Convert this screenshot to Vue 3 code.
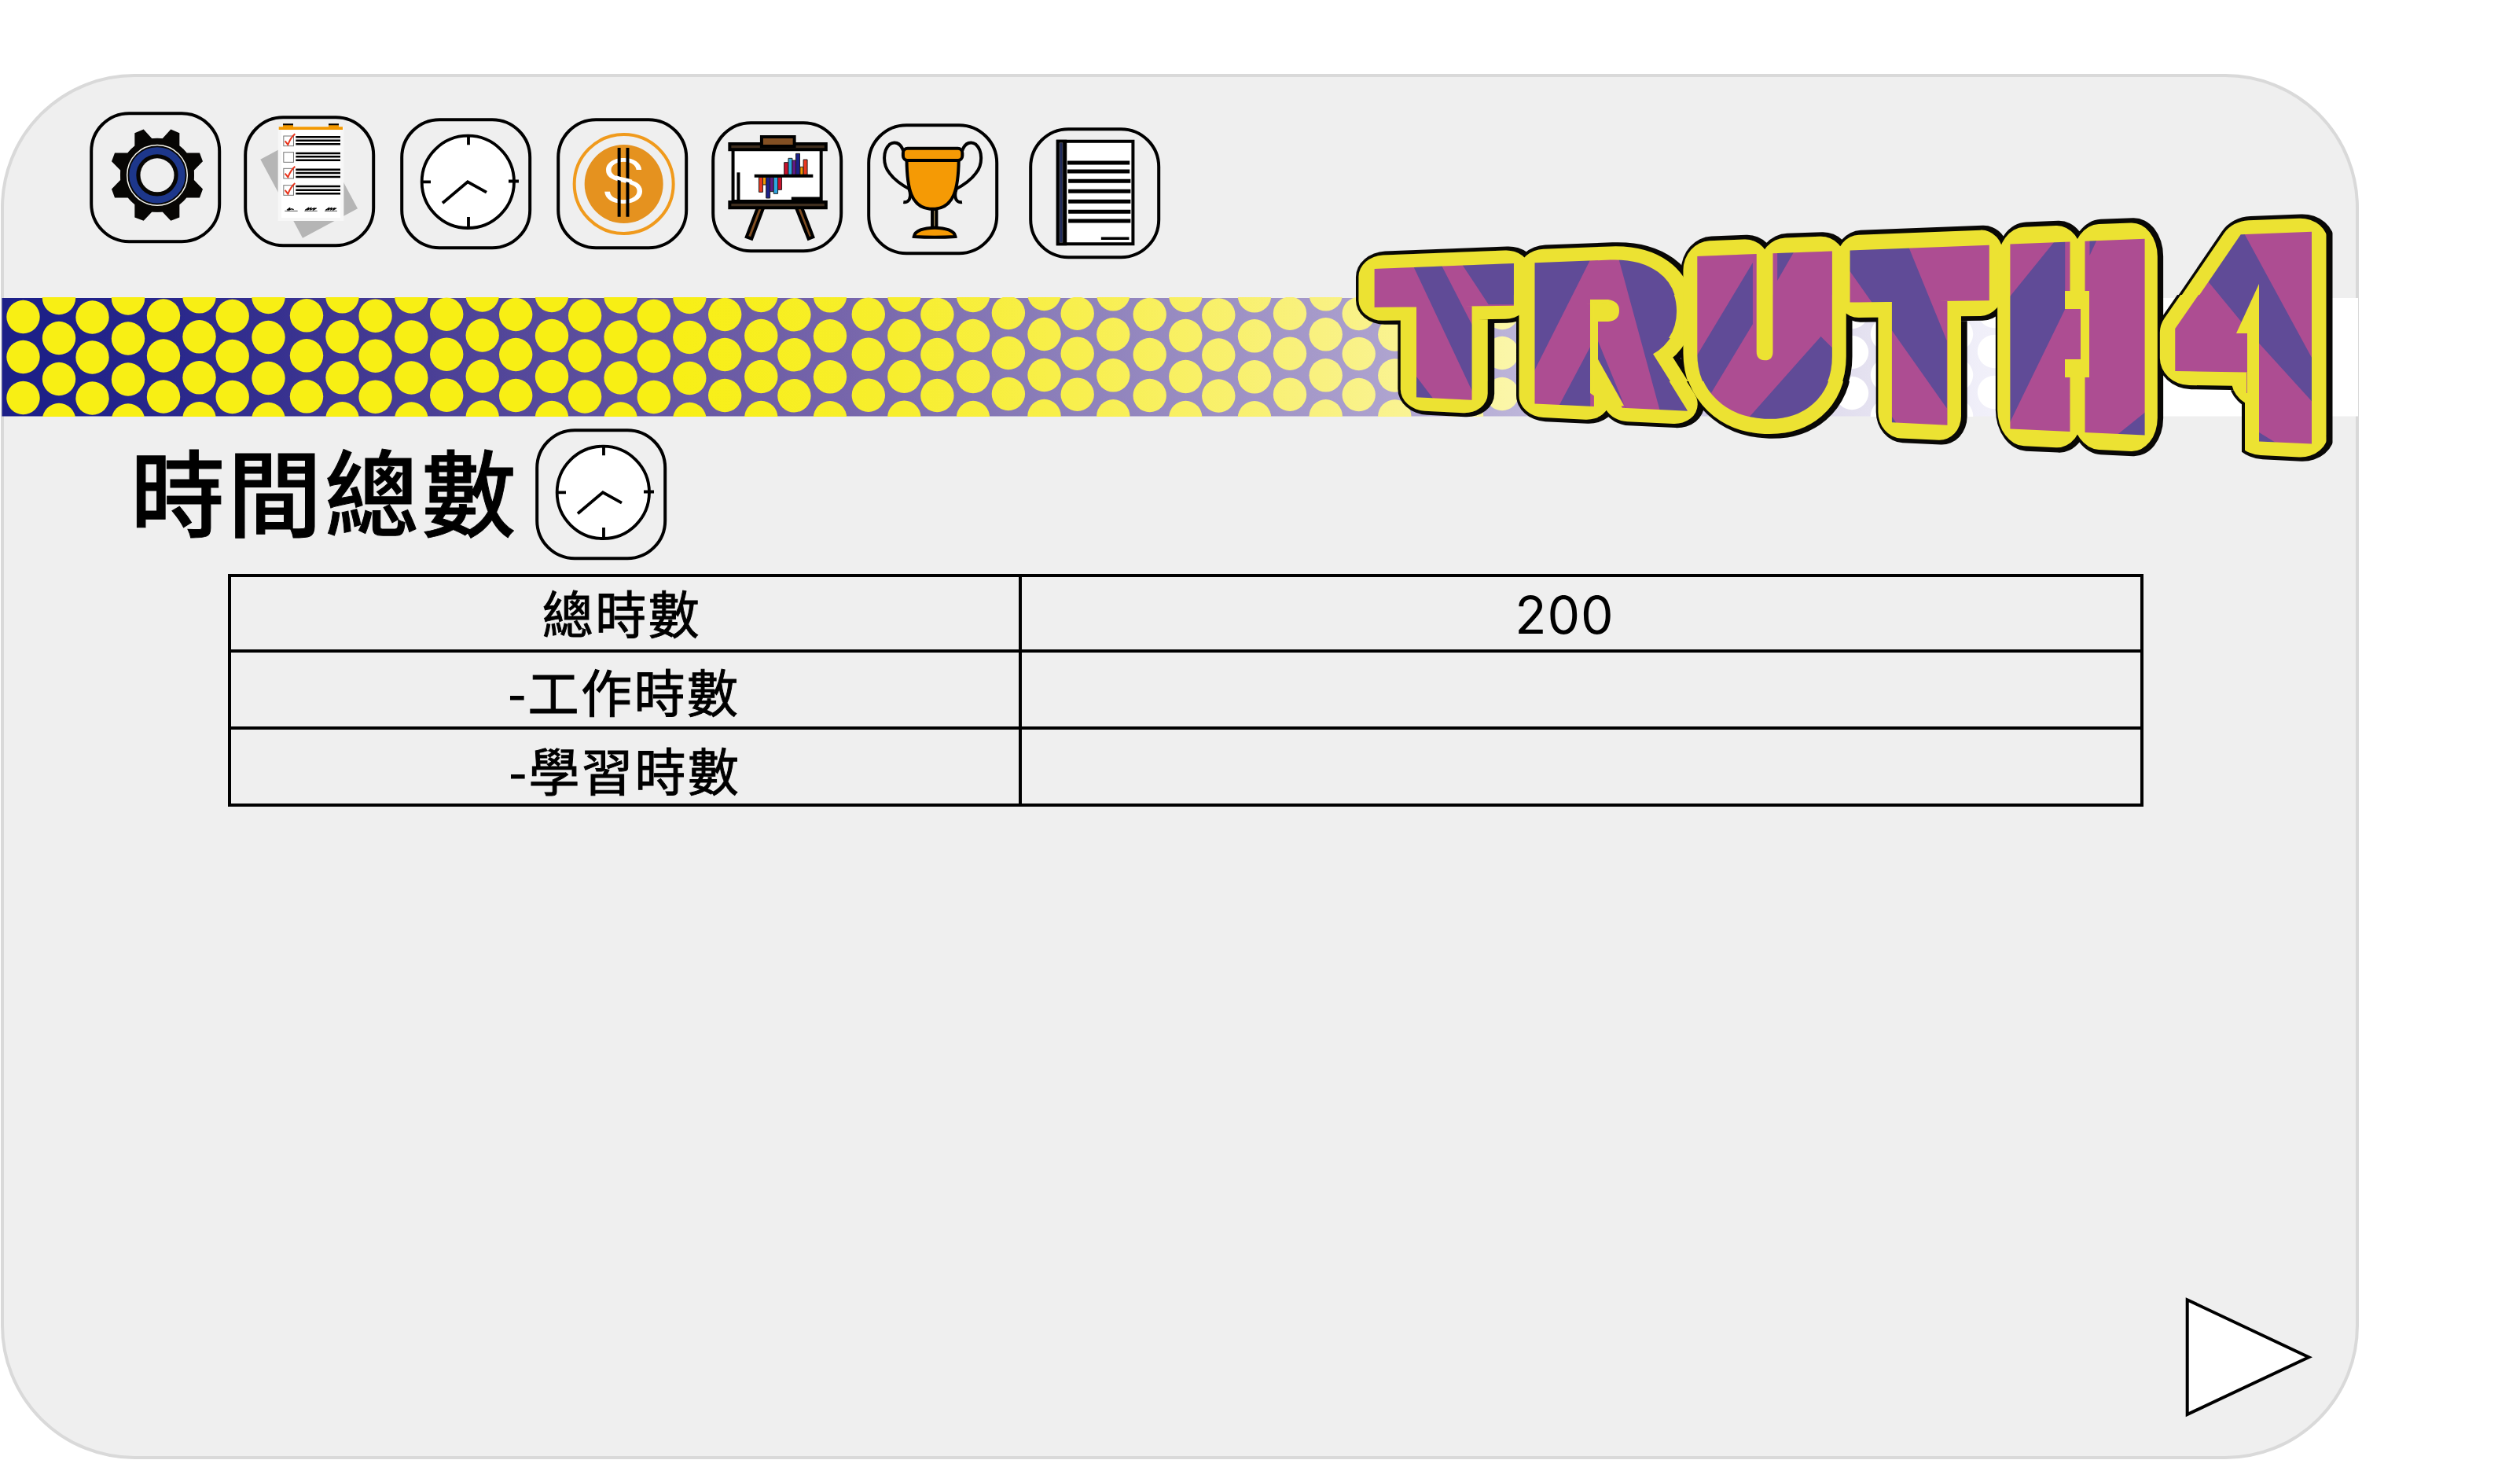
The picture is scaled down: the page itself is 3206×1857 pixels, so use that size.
<script setup>
import { defineComponent, h } from 'vue'

/* ---------- dotted ribbon ---------- */
const oddColumns = [
  [29.5, 403], [117.5, 403.5], [208, 401.5], [295.7, 402], [390, 401.3], [477.6, 401.7],
  [568.2, 399.7], [656.2, 400], [744.1, 401.5], [831.8, 402], [922.2, 400], [1010.4, 400.3],
  [1104.8, 399.7], [1192.4, 400], [1282.9, 398], [1370.7, 398.7], [1462.7, 400], [1550.3, 400.5],
  [1641, 398.7], [1728.7, 399], [1820, 398], [1911, 398], [2000, 397], [2356, 397], [2537, 396]
]
const evenColumns = [
  [75, 430], [163, 430.5], [253.5, 428.3], [341.5, 429], [435.5, 428.3], [523.3, 428.5],
  [613.7, 426.5], [702, 427], [789.6, 428.5], [877.3, 429], [968.3, 427], [1056, 427.3],
  [1150.3, 426.7], [1238, 427], [1328.5, 425], [1416.3, 425.3], [1508.3, 427], [1596, 427.3],
  [1686.7, 425.3], [1774.3, 425.5], [1866, 425], [2401, 425], [2489, 425]
]
const dots = [
  ...oddColumns.flatMap(([x, y]) => [0, 51, 103].map((d) => ({ x, y: y + d }))),
  ...evenColumns.flatMap(([x, y]) => [-51, 0, 52, 104].map((d) => ({ x, y: y + d })))
]

/* ---------- word logo ---------- */
const SIZE = 200
const pen = document.createElement('canvas').getContext('2d')
const fitLetter = ({ id, ch, x0, x1, y0, y1, grow }) => {
  pen.font = `900 ${SIZE}px Inter`
  const m = pen.measureText(ch)
  const left = -m.actualBoundingBoxLeft - grow
  const top = -m.actualBoundingBoxAscent - grow
  const sx = (x1 - x0) / (m.actualBoundingBoxRight + grow - left)
  const sy = (y1 - y0) / (m.actualBoundingBoxDescent + grow - top)
  const tx = x0 - left * sx
  const ty = y0 - top * sy
  const cx = (x0 + x1) / 2
  const scale = Math.sqrt(sx * sy)
  return {
    id,
    ch,
    at: (k, dy) => `matrix(${sx} ${k * sx} 0 ${sy} ${tx} ${ty + dy + k * (tx - cx)})`,
    stroke: (d) => 2 * (grow + d / scale)
  }
}
const letters = [
  { id: 'l0', ch: 'T', x0: 1748, x1: 1926, y0: 338, y1: 507, grow: 9 },
  { id: 'l1', ch: 'R', x0: 1952, x1: 2141, y0: 330, y1: 518, grow: 8 },
  { id: 'l2', ch: 'U', x0: 2159, x1: 2331, y0: 322, y1: 533, grow: 14 },
  { id: 'l3', ch: 'T', x0: 2353, x1: 2531, y0: 314.5, y1: 539, grow: 9 },
  { id: 'l4', ch: 'H', x0: 2557, x1: 2729, y0: 306.5, y1: 549.5, grow: 17 },
  { id: 'l5', ch: '4', x0: 2767, x1: 2965, y0: 297, y1: 500, grow: 14 }
].map(fitLetter)
const word = letters.slice(0, 5)
const digit = letters.slice(5)
/* horizontal slices, each with its own slope, give the word its flare;
   the digit's foot is lengthened by moving its lowest slice down */
const slices = (foot, right) => [
  { x0: 1700, x1: 2760, y0: 200, y1: 375, k: -0.0386, dy: 0, set: word },
  { x0: 1700, x1: 2760, y0: 375, y1: 430, k: -0.013, dy: 0, set: word },
  { x0: 1700, x1: 2760, y0: 430, y1: 485, k: 0.02, dy: 0, set: word },
  { x0: 1700, x1: 2760, y0: 485, y1: 625, k: 0.048, dy: 0, set: word },
  { x0: 2735, x1: right, y0: 200, y1: 375, k: -0.0386, dy: 0, set: digit },
  { x0: 2735, x1: right, y0: 375, y1: 430, k: -0.013, dy: 0, set: digit },
  { x0: 2735, x1: foot, y0: 430, y1: 522, k: 0.015, dy: 0, set: digit },
  { x0: foot, x1: right, y0: 430, y1: 482, k: 0.015, dy: 0, set: digit },
  { x0: foot, x1: right, y0: 482, y1: 625, k: 0.048, dy: 61, set: digit }
]
const layers = [
  { id: 'black', color: '#090806', spread: 24, shift: 2.5, foot: 2852, right: 2967.5, join: 'round' },
  { id: 'yellow', color: '#ece232', spread: 18.5, shift: 0, foot: 2856, right: 2959.5, join: 'round' },
  { id: 'fill', color: '#fff', spread: 0, shift: 0, foot: 2874, right: 2941, join: 'miter' }
].map((layer) => ({
  ...layer,
  slices: slices(layer.foot, layer.right).map((s, i) => ({ ...s, id: `${layer.id}${i}` }))
}))
const outlines = layers.slice(0, 2)
const face = layers[2]

/* ---------- checklist icon ---------- */
const checkRows = [
  { box: 131, lines: [136, 149.5, 163], on: true },
  { box: 193, lines: [198, 211, 224.5], on: false },
  { box: 255, lines: [260, 273, 288], on: true },
  { box: 319, lines: [324, 338, 352], on: true }
]

/* ---------- easel icon ---------- */
const easelBars = [
  [282, 230, 14, 47, '#c7112c'], [296, 214, 13, 63, '#2ca6e0'], [309, 222, 12, 55, '#601986'],
  [321, 196, 13, 81, '#1d2088'], [335, 247, 11, 30, '#f39800'], [346, 219, 13, 58, '#e83820'],
  [198, 286, 13, 57, '#e83820'], [211, 286, 11, 29, '#f39800'], [222, 286, 13, 80, '#1d2088'],
  [235, 286, 12, 55, '#601986'], [247, 286, 14, 63, '#2ca6e0'], [261, 286, 13, 48, '#c7112c']
]
const noteLines = [[1223, 232], [1223, 265], [1226, 302], [1226, 341], [1226, 380], [1226, 419], [1226, 454]]

const Tile = defineComponent({
  setup: (_, { slots }) => () =>
    h('svg', { width: 168, height: 168, viewBox: '0 0 168 168' }, [
      h('rect', { x: 2.2, y: 2.2, width: 163, height: 163, rx: 48, fill: 'none', stroke: '#000', 'stroke-width': 4 }),
      slots.default?.()
    ])
})
const ClockFace = defineComponent({
  setup: () => () =>
    h('g', { transform: 'scale(.3333) translate(-57 -60)', fill: 'none', stroke: '#000', 'stroke-width': 11.5 }, [
      h('circle', { cx: 316, cy: 304, r: 176, fill: '#fff' }),
      h('path', { d: 'M318 125V163M318 438V482M138 304H174M471 301.5H510' }),
      h('path', { d: 'M219 385L315 304L387 344' })
    ])
})

const rows = [
  { label: '總時數', value: '200' },
  { label: '-工作時數', value: '' },
  { label: '-學習時數', value: '' }
]
</script>

<template>
  <div class="page">
    <main class="panel">
      <nav class="toolbar">
        <Tile class="t1">
          <g transform="translate(86 80.8) scale(.3333)">
            <path fill="#070604" d="M-86-111V-161L-52-175L-20-140H20L52-175L85-161V-111L111-85H162L174-53L140-18V18L174 53L162 86H111L85 111V161L52 174L20 140H-20L-52 174L-86 161V111L-111 86H-162L-174 53L-140 18V-18L-174-53L-162-85H-111Z" />
            <circle r="141" fill="#070604" />
            <circle r="115" fill="none" stroke="#f4f4ec" stroke-width="4.5" />
            <circle r="93.5" fill="none" stroke="#1d378b" stroke-width="27" />
            <circle r="64.5" fill="#efefef" />
          </g>
        </Tile>
        <Tile class="t2">
          <g transform="scale(.3333) translate(-633 -54)">
            <path fill="#b5b5b5" d="M697 221L907 109L1068 409L858 521Z" />
            <rect x="764" y="97" width="251" height="359" fill="#f7f7f7" />
            <rect x="777" y="110" width="225" height="334" fill="#fff" />
            <path fill="#f39800" d="M767 97H783V86H822V97H957V86H996V97H1011V108H767Z" />
            <path stroke="#000" stroke-width="6" d="M783 88H822M957 88H996" />
            <g v-for="r in checkRows" :key="r.box" fill="none">
              <rect x="785.5" :y="r.box + 1" width="38" height="38" stroke="#777" stroke-width="3" />
              <path v-for="y in r.lines" :key="y" :d="`M832 ${y}H1002`" stroke="#000" stroke-width="7.5" />
              <path v-if="r.on" :d="`M791 ${r.box + 20}L802 ${r.box + 34}Q812 ${r.box + 8} 829 ${r.box - 7}`" stroke="#e8341c" stroke-width="6" />
            </g>
            <path stroke="#333" stroke-width="2.500" fill="none" d="M790 418H839M865 418H914M942 418H990" />
            <path stroke="#000" stroke-width="4" fill="none" d="M798 415L810 406L806 414L816 410L824 413M868 415L880 407L878 413L890 407L888 413L902 408L900 413L911 407M946 415L958 407L956 413L968 407L966 413L978 408L976 413L987 407" />
          </g>
        </Tile>
        <Tile class="t3"><ClockFace /></Tile>
        <Tile class="t4">
          <g transform="scale(.3333) translate(-655 -60)">
            <circle cx="912" cy="312" r="189" fill="none" stroke="#f09a1c" stroke-width="12" />
            <circle cx="912" cy="312" r="150" fill="#e5921f" />
            <text class="coin" transform="translate(910.5 385) scale(1.24 1)" text-anchor="middle">S</text>
            <path stroke="#000" stroke-width="12" d="M894 174V437M926.500 174V437" />
            <path stroke="#fff" stroke-width="14" fill="none" d="M880 286Q894 291 912 295T942 303" />
          </g>
        </Tile>
        <Tile class="t5">
          <g class="fixed" transform="scale(.3827 .3333) translate(-40 -72)" stroke="#000" stroke-width="4">
            <path fill="#824f23" d="M195 400H214L174 521L157 514ZM321 400H340L378 514L363 521Z" />
            <rect x="112" y="180" width="293" height="198" fill="#fff" />
            <rect x="101" y="159" width="320" height="22" fill="#3f2e1e" />
            <rect x="101" y="381" width="320" height="22" fill="#3f2e1e" />
            <rect x="207" y="132" width="109" height="36" fill="#824f23" />
            <path d="M130 268V375" />
            <path d="M306 368H405" stroke-width="4.500" />
            <rect v-for="b in easelBars" :key="b[0]" :x="b[0]" :y="b[1]" :width="b[2]" :height="b[3]" :fill="b[4]" stroke="#222" stroke-width="1" />
            <path d="M183 281H378" />
          </g>
        </Tile>
        <Tile class="t6">
          <g class="fixed" transform="scale(.3827 .3333) translate(-557 -82)" stroke="#000" stroke-width="4" fill="none">
            <path d="M678 188C668 152 646 150 632 162C610 185 608 238 632 272C650 300 674 318 702 335M697 333C706 362 698 386 678 382" />
            <path d="M873 188C883 152 905 150 919 162C941 185 943 238 919 272C901 300 877 318 849 335M854 333C845 362 853 386 873 382" />
            <rect x="774" y="408" width="14" height="72" fill="#a08a5a" />
            <path fill="#f59a05" d="M689 222C690 330 704 402 766 408H784C846 402 861 330 862 222Z" />
            <rect x="677" y="177" width="197" height="46" rx="15" ry="17" fill="#f59a05" />
            <path fill="#f59a05" d="M713 514C716 491 746 480 782 480C818 480 848 491 851 514Q782 519 713 514Z" />
          </g>
        </Tile>
        <Tile class="t7">
          <g class="fixed" transform="scale(.3827 .3333) translate(-1095 -97)" stroke="#000">
            <rect x="1191" y="150" width="250" height="392" fill="#fff" stroke-width="4" />
            <path stroke="none" d="M1186 144H1221V548H1186Z" />
            <rect x="1197" y="156" width="10" height="380" fill="#1f2a5c" stroke="#555" stroke-width=".8" />
            <path v-for="l in noteLines" :key="l[1]" :d="`M${l[0]} ${l[1]}h207`" stroke-width="5" />
            <path d="M1335 521H1428" stroke-width="3.500" />
          </g>
        </Tile>
      </nav>

      <svg class="ribbon" width="2998" height="152" viewBox="2 378 2998 152">
        <defs>
          <linearGradient id="sea" gradientUnits="userSpaceOnUse" x1="0" y1="0" x2="3000" y2="0">
            <stop offset=".02" stop-color="#1d2088" />
            <stop offset=".08" stop-color="#2b298c" />
            <stop offset=".16" stop-color="#443a93" />
            <stop offset=".26" stop-color="#5f519f" />
            <stop offset=".36" stop-color="#7766ab" />
            <stop offset=".45" stop-color="#8c7fba" />
            <stop offset=".56" stop-color="#a69aca" />
            <stop offset=".64" stop-color="#bbb3d8" />
            <stop offset=".79" stop-color="#e4e1f0" />
            <stop offset=".84" stop-color="#f0eff9" />
            <stop offset=".91" stop-color="#fff" />
          </linearGradient>
          <linearGradient id="sun" gradientUnits="userSpaceOnUse" x1="0" y1="0" x2="3000" y2="0">
            <stop offset=".28" stop-color="#f8ef14" />
            <stop offset=".38" stop-color="#f7ee2e" />
            <stop offset=".45" stop-color="#f8ef4b" />
            <stop offset=".56" stop-color="#f9f180" />
            <stop offset=".64" stop-color="#fbf6a8" />
            <stop offset=".78" stop-color="#fff" />
          </linearGradient>
        </defs>
        <rect x="2.500" y="379" width="2997.500" height="150.500" fill="url(#sea)" />
        <g fill="url(#sun)">
          <circle v-for="(d, i) in dots" :key="i" :cx="d.x" :cy="d.y" r="21.2" />
        </g>
      </svg>

      <header class="heading">
        <h1>時間總數</h1>
        <Tile><ClockFace /></Tile>
      </header>

      <section class="grid">
        <div v-for="r in rows" :key="r.label" class="row">
          <div class="cell label">{{ r.label }}</div>
          <div class="cell value">{{ r.value }}</div>
        </div>
      </section>

      <svg class="next" width="166" height="160" viewBox="2778 1646 166 160">
        <path d="M2782.700 1653.300L2937.300 1726.300L2782.700 1799Z" fill="#fff" stroke="#000" stroke-width="4" />
      </svg>
    </main>

    <svg class="logo" width="1280" height="360" viewBox="1700 240 1280 360">
      <defs>
        <text v-for="l in letters" :id="l.id" :key="l.id" class="glyph">{{ l.ch }}</text>
        <template v-for="layer in layers" :key="layer.id">
          <clipPath v-for="s in layer.slices" :id="s.id" :key="s.id">
            <rect :x="s.x0" :y="s.y0" :width="s.x1 - s.x0" :height="s.y1 - s.y0" />
          </clipPath>
        </template>
        <mask id="word" maskUnits="userSpaceOnUse" x="1700" y="240" width="1280" height="360">
          <g v-for="s in face.slices" :key="s.id" :clip-path="`url(#${s.id})`" :fill="face.color" :stroke="face.color" :stroke-linejoin="face.join">
            <use v-for="l in s.set" :key="l.id" :href="`#${l.id}`" :transform="l.at(s.k, s.dy)" :stroke-width="l.stroke(0)" />
          </g>
        </mask>
      </defs>
      <g v-for="layer in outlines" :key="layer.id" :fill="layer.color" :stroke="layer.color" :stroke-linejoin="layer.join">
        <g v-for="s in layer.slices" :key="s.id" :clip-path="`url(#${s.id})`">
          <g :transform="`translate(${layer.shift} 0)`">
            <use v-for="l in s.set" :key="l.id" :href="`#${l.id}`" :transform="l.at(s.k, s.dy)" :stroke-width="l.stroke(layer.spread)" />
          </g>
        </g>
      </g>
      <g mask="url(#word)">
        <rect x="1700" y="240" width="1280" height="360" fill="#ad4d92" />
        <g fill="#604b97" transform="translate(1700 250) scale(.44643 .33333)">
          <path d="M215 250H295L302 268L390 497V750L222 272ZM354 250L520 240V412H434ZM200 636L229 688L280 778L200 790Z" />
          <path d="M555 230H728L565 664L555 690ZM724 573V815L628 815ZM803 228H1000V840H927ZM745 548V622L828 812H826Z" />
          <path d="M1187 252V487L1066 755L1020 780V624ZM1257 200H1309L1257 321ZM1381 534L1420 586V870H1158Z" />
        </g>
        <g fill="#604b97" transform="translate(2350 240) scale(.44643 .33333)">
          <path d="M-2 215H173L284 580V838L127 540L62 418L-2 296ZM120 856L142 898H120Z" />
          <path d="M598 190H621V460L460 902V418ZM691 180H717L691 255ZM855 847V960H750Z" />
          <path d="M1070 160H1127L1330 660V820L1174 590L1030 356ZM1174 930L1222 970H1174Z" />
        </g>
        <g fill="#ece232">
          <path d="M2023 381H2046Q2060 383 2060 395Q2060 408 2046 409H2033V457L2066 516L2050 519L2023 500Z" />
          <path d="M2627 370H2658V480H2627V457H2647V393H2627Z" />
          <path d="M2874 361V500H2859V424H2845Z" />
        </g>
      </g>
    </svg>
  </div>
</template>

<style scoped>
.page {
  position: relative;
  box-sizing: border-box;
  width: 3206px;
  height: 1857px;
  padding-top: 94px;
  background: #fff;
  overflow: hidden;
}
.panel {
  box-sizing: border-box;
  display: flex;
  flex-direction: column;
  width: 3000px;
  height: 1762px;
  margin-left: 1px;
  border: 4px solid #d9d9d9;
  border-radius: 170px;
  background: #efefef;
}
.panel svg {
  display: block;
  flex: none;
}
.toolbar {
  display: flex;
  align-items: flex-start;
  height: 280px;
  flex: none;
  padding-left: 109px;
}
.t1 { margin-top: 44px; }
.t2 { margin: 49px 0 0 28px; }
.t3 { margin: 52px 0 0 30.5px; }
.t4 { margin: 52px 0 0 31.5px; }
.t5 { margin: 55.5px 0 0 28.5px; }
.t6 { margin: 59px 0 0 30px; }
.t7 { margin: 63.5px 0 0 38px; }
.fixed * { vector-effect: non-scaling-stroke; }
.coin {
  font: 300 229px Inter, sans-serif;
  fill: #fff;
}
.ribbon { margin-left: -3px; }
.heading {
  display: flex;
  height: 200px;
  flex: none;
  padding-left: 161px;
}
.heading h1 {
  width: 515px;
  margin: 32px 0 0;
  font: 500 120px/120px "Noto Sans CJK TC", sans-serif;
  letter-spacing: 3.5px;
  white-space: nowrap;
  color: #000;
  -webkit-text-stroke: 1px #000;
}
.heading svg { margin-top: 15px; }
.grid {
  box-sizing: border-box;
  flex: none;
  width: 2437px;
  margin-left: 285px;
  border: 4px solid #000;
}
.row {
  display: flex;
  height: 92px;
}
.row + .row {
  height: 94px;
  border-top: 4px solid #000;
}
.cell {
  display: flex;
  align-items: center;
  justify-content: center;
  box-sizing: border-box;
  color: #000;
  white-space: nowrap;
}
.label {
  width: 1006px;
  padding: 6px 0 0;
  border-right: 4px solid #000;
  font: 400 65px/88px "Noto Sans CJK TC", sans-serif;
  letter-spacing: 2.5px;
  -webkit-text-stroke: 1px #000;
}
.row:nth-child(1) .label { padding: 0 8px 4px 0; }
.row:nth-child(2) .label { padding: 2px 2px 0 0; }
.value {
  flex: 1;
  padding: 4px 42px 0 0;
  font: 400 66px/88px Inter, sans-serif;
  letter-spacing: 1px;
}
.next {
  margin: 620px 0 0 2773px;
}
.logo {
  position: absolute;
  left: 1700px;
  top: 240px;
}
.glyph {
  font: 900 200px Inter, sans-serif;
}
</style>
